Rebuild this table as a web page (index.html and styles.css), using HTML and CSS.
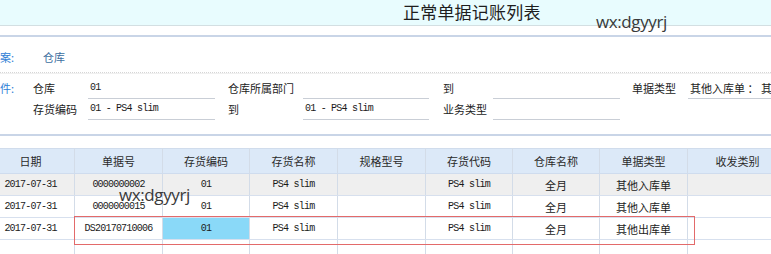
FILE: index.html
```html
<!DOCTYPE html>
<html lang="zh">
<head>
<meta charset="utf-8">
<title>正常单据记账列表</title>
<link rel="stylesheet" href="styles.css">
</head>
<body>
<div class="page">
  <header class="topbar">
    <h1 class="title">正常单据记账列表</h1>
    <span class="wm wm-top">wx:dgyyrj</span>
  </header>
  <div class="rule"></div>

  <section class="filters">
    <div class="scheme">
      <span class="key">案:</span>
      <span class="scheme-val">仓库</span>
    </div>
    <div class="dots"></div>
    <div class="cond">
      <span class="key c1">件:</span>
      <span class="lbl">仓库</span>
      <span class="inp w127 mono">01</span>
      <span class="lbl">仓库所属部门</span>
      <span class="inp w126"></span>
      <span class="lbl">到</span>
      <span class="inp w127"></span>
      <span class="lbl">单据类型</span>
      <span class="inp wrest">其他入库单 ： 其他出库单</span>

      <span class="c1"></span>
      <span class="lbl">存货编码</span>
      <span class="inp w127 mono">01 - PS4 slim</span>
      <span class="lbl">到</span>
      <span class="inp w126 mono">01 - PS4 slim</span>
      <span class="lbl">业务类型</span>
      <span class="inp w127"></span>
      <span></span>
      <span></span>
    </div>
  </section>
  <div class="rule rule-bottom"></div>

  <section class="grid-wrap">
    <table class="grid">
      <colgroup>
        <col class="cw88"><col class="cw88"><col class="cw87"><col class="cw88"><col class="cw88"><col class="cw87"><col class="cw87"><col class="cw88"><col class="cw100">
      </colgroup>
      <thead>
        <tr><th>日期</th><th>单据号</th><th>存货编码</th><th>存货名称</th><th>规格型号</th><th>存货代码</th><th>仓库名称</th><th>单据类型</th><th>收发类别</th></tr>
      </thead>
      <tbody>
        <tr class="alt"><td class="mono">2017-07-31</td><td class="mono">0000000002</td><td class="mono">01</td><td class="mono">PS4 slim</td><td></td><td class="mono">PS4 slim</td><td>全月</td><td>其他入库单</td><td></td></tr>
        <tr><td class="mono">2017-07-31</td><td class="mono">0000000015</td><td class="mono">01</td><td class="mono">PS4 slim</td><td></td><td class="mono">PS4 slim</td><td>全月</td><td>其他入库单</td><td></td></tr>
        <tr><td class="mono">2017-07-31</td><td class="mono">DS20170710006</td><td class="mono sel">01</td><td class="mono">PS4 slim</td><td></td><td class="mono">PS4 slim</td><td>全月</td><td>其他出库单</td><td></td></tr>
        <tr class="empty"><td></td><td></td><td></td><td></td><td></td><td></td><td></td><td></td><td></td></tr>
      </tbody>
    </table>
    <div class="mark-box"></div>
    <span class="wm wm-grid">wx:dgyyrj</span>
  </section>
</div>
</body>
</html>
```

FILE: styles.css
```css
* { box-sizing: border-box; }
html, body {
  margin: 0;
  padding: 0;
  background: #ffffff;
}
body {
  width: 771px;
  height: 254px;
  overflow: hidden;
  font-family: "Noto Sans CJK SC", "Liberation Sans", sans-serif;
  color: #222;
}
.page {
  width: 771px;
  position: relative;
}
.topbar {
  position: relative;
  height: 26px;
  background: #e8fcfe;
  border-bottom: 1px solid #d3dfe2;
  padding-left: 403px;
}
.title {
  margin: 0;
  font-size: 17px;
  font-weight: normal;
  line-height: 24px;
  color: #1e1e1e;
  letter-spacing: 0.2px;
}
.wm {
  position: absolute;
  font-family: "Open Sans", "Liberation Sans", sans-serif;
  font-size: 17px;
  line-height: 20px;
  color: #3a3a3a;
  letter-spacing: -0.4px;
}
.wm-top { left: 596px; top: 12px; }
.rule {
  height: 2px;
  background: #c9d5e7;
  margin-top: 9px;
}
.filters {
  padding-top: 10px;
}
.scheme {
  display: flex;
  height: 20px;
  line-height: 20px;
  font-size: 11px;
}
.key {
  color: #2f80d6;
  width: 43px;
  font-size: 11px;
}
.scheme-val {
  color: #3d6f9f;
}
.dots {
  margin-top: 5px;
  height: 2px;
  border-top: 1px dotted #d6d6d6;
  border-bottom: 1px solid #f0f0f0;
}
.cond {
  margin-top: 4px;
  display: grid;
  grid-template-columns: 33px 55px 140px 75px 140px 50px 139px 56px 1fr;
  grid-auto-rows: 21px;
  font-size: 11px;
  line-height: 20px;
}
.cond .key { width: auto; }
.lbl { color: #222; }
.inp {
  display: block;
  height: 21px;
  border-bottom: 1px solid #c9ced6;
  color: #222;
  padding-left: 2px;
  white-space: nowrap;
  overflow: hidden;
}
.w127 { width: 127px; }
.w126 { width: 126px; }
.wrest { width: 100%; }
.mono,
.grid td.mono {
  font-family: "Liberation Mono", "DejaVu Sans Mono", monospace;
  font-size: 10px;
  letter-spacing: -0.78px;
  color: #1a1a1a;
}
.rule-bottom { margin-top: 14px; }

.grid-wrap {
  position: relative;
  margin-top: 12px;
  margin-left: -14px;
}
.grid {
  border-collapse: collapse;
  table-layout: fixed;
  width: 788px;
}
.cw88 { width: 88px; }
.cw87 { width: 87px; }
.cw100 { width: 100px; }
.grid th, .grid td {
  text-align: center;
  padding: 0;
  border-left: 1px solid #d3dce8;
  border-right: 1px solid #d3dce8;
  white-space: nowrap;
  overflow: hidden;
}
.grid th {
  height: 25px;
  background: #dce9f8;
  font-size: 11px;
  font-weight: normal;
  color: #2a2a2a;
  border-top: 1px solid #d0dcec;
  border-bottom: 1px solid #cfdcee;
}
.grid td {
  height: 22px;
  font-size: 11px;
  color: #222;
  border-bottom: 1px solid #d7e0ee;
}
.grid tr.alt td { background: #efefef; }
.grid td.sel { background: #8ad9f8; }
.grid tr.empty td { height: 22px; }
.mark-box {
  position: absolute;
  left: 88px;
  top: 68px;
  width: 621px;
  height: 29px;
  border: 1.5px solid #e36a6a;
}
.wm-grid { left: 133px; top: 37px; }
```
